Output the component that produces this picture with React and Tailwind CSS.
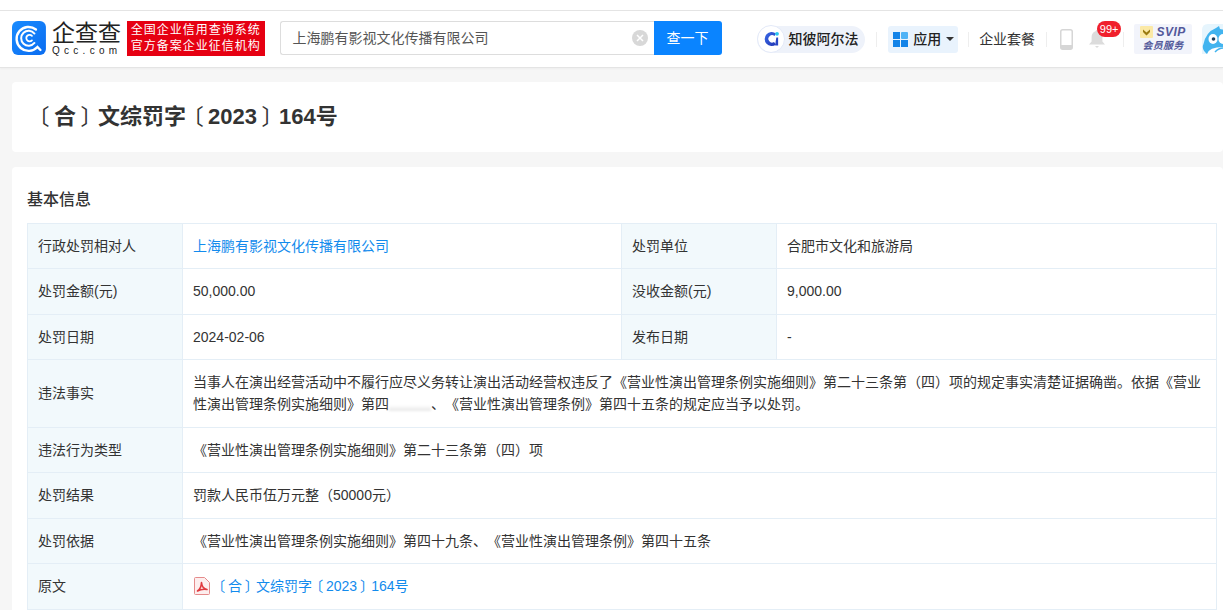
import React from 'react';

const FONT = 'font-["Liberation_Sans","Noto_Sans_CJK_SC",sans-serif]';

const LogoIcon = () => (
    <svg width="34" height="34" viewBox="0 0 34 34">
        <defs>
            <linearGradient id="logoBg" x1="0" y1="0" x2="1" y2="1">
                <stop offset="0" stopColor="#1a8cff" />
                <stop offset="1" stopColor="#0a6cf0" />
            </linearGradient>
        </defs>
        <rect width="34" height="34" rx="6" fill="url(#logoBg)" />
        <path d="M24 8.500a12 12 0 1 0 1.500 17.500l3 3" fill="none" stroke="#fff" strokeWidth="2.400" strokeLinecap="round" />
        <path d="M22.500 12.500a7.500 7.500 0 1 0 0 9.500" fill="none" stroke="#fff" strokeWidth="2" strokeLinecap="round" />
        <path d="M20 14.800a3.300 3.300 0 1 0 0 4.600" fill="none" stroke="#fff" strokeWidth="1.800" strokeLinecap="round" />
    </svg>
);

const AlphaIcon = () => (
    <svg width="28" height="28" viewBox="0 0 28 28" className="shrink-0">
        <defs>
            <linearGradient id="alphaC" x1="0" y1="0" x2="1" y2="1">
                <stop offset="0" stopColor="#3a6be8" />
                <stop offset="1" stopColor="#2236b4" />
            </linearGradient>
        </defs>
        <circle cx="14" cy="14" r="13.500" fill="#ffffff" stroke="#e3e9f8" />
        <path d="M19 8.500A7 7 0 1 0 19 19.500L17 17A3.700 3.700 0 1 1 17.500 11z" fill="url(#alphaC)" />
        <path d="M19.300 12.500h1.800v8h-3z" fill="#2a46c4" />
        <circle cx="20" cy="8.800" r="1.900" fill="#28c5f0" />
    </svg>
);

const AppsIcon = () => (
    <svg width="15" height="15" viewBox="0 0 15 15">
        <rect width="7" height="7" fill="#1283e8" />
        <rect x="8" width="7" height="7" rx="1" fill="#4db2f6" />
        <rect y="8" width="7" height="7" fill="#1283e8" />
        <rect x="8" y="8" width="7" height="7" fill="#1283e8" />
    </svg>
);

const PhoneIcon = () => (
    <svg width="13" height="21" viewBox="0 0 13 21">
        <rect x="0.750" y="0.750" width="11.500" height="19.500" rx="2" fill="none" stroke="#d6d6d6" strokeWidth="1.500" />
        <rect x="1" y="16" width="11" height="4" fill="#d6d6d6" />
    </svg>
);

const BellIcon = () => (
    <svg width="16" height="20" viewBox="0 0 16 20">
        <path d="M8 1c.8 0 1.300.5 1.400 1.200C12 3 13.400 5.200 13.400 8v4.500L16 15.500H0l2.600-3V8C2.600 5.200 4 3 6.600 2.200 6.700 1.500 7.200 1 8 1z" fill="#dcdcdc" />
        <path d="M6 17h4l-2 2z" fill="#dcdcdc" />
    </svg>
);

const CrownIcon = () => (
    <svg width="13" height="12" viewBox="0 0 13 12" className="shrink-0">
        <rect width="13" height="12" rx="1" fill="#fbe9a6" />
        <path d="M3 3.500l3.500 3 3.500-3v2.500L6.500 9.500 3 6z" fill="#9a7a10" />
    </svg>
);

const Penguin = () => (
    <svg width="21" height="30" viewBox="0 0 21 30">
        <path d="M0 6Q0 0 6 0h15v30H0z" fill="#e6f5fd" />
        <path d="M14 4l3-2 1 3q3 .5 3 .5V30H5Q-1 25 1.500 20 4 8 14 4z" fill="#42b4ef" />
        <ellipse cx="11" cy="15" rx="4.500" ry="5" fill="#fff" />
        <ellipse cx="21" cy="15" rx="4.500" ry="5" fill="#fff" />
        <circle cx="11.500" cy="15" r="1.800" fill="#1d3f5e" />
        <path d="M5 30q2-7 16-7v7z" fill="#fff" />
        <path d="M13 28q4-4 8-4" fill="none" stroke="#42b4ef" strokeWidth="1.500" />
    </svg>
);

const PdfIcon = () => (
    <svg width="16" height="18" viewBox="0 0 16 18" className="shrink-0">
        <path d="M1.500.5h9l5 5v11a1 1 0 0 1-1 1h-13a1 1 0 0 1-1-1v-15a1 1 0 0 1 1-1z" fill="#fdeeee" stroke="#e58b8b" />
        <path d="M3.500 14c2.500-1.500 3.800-4.500 4-8.500.3 4 2.300 6.300 5.500 7-3.300-.5-6.500-.2-9.500 1.500z" fill="none" stroke="#e0393e" strokeWidth="1.600" strokeLinejoin="round" />
    </svg>
);

const Divider = ({ className }) => <div className={`w-px h-[15px] bg-[#eeeeee] ${className}`} />;

// the reference has these brackets centred in their cell and light
const Open = () => <span className="inline-block font-normal pl-[0.3em] pr-[0.2em] [text-spacing-trim:trim-start]">〔</span>;
const Close = () => <span className="inline-block font-normal pl-[0.2em] tracking-[-0.2em]">〕</span>;

const Header = () => (
    <div className="bg-white pt-[10px]">
        <div className="h-[58px] border-y border-t-[#e4e4e4] border-b-[#e4e4e4] flex items-center pl-3 pb-[2px] overflow-hidden shadow-[0_1px_2px_rgba(0,0,0,0.04)]">
            <LogoIcon />
            <div className="ml-[6px] w-[70px] text-[#222222] flex flex-col">
                <span className="text-[23px] leading-[24px] whitespace-nowrap">企查查</span>
                <span className="text-[10px] leading-[11px] tracking-[4.300px] whitespace-nowrap">Qcc.com</span>
            </div>
            <div className="ml-[5px] w-[138px] h-[35px] bg-[#e60012] text-white text-[12px] leading-[16px] flex flex-col justify-center items-center">
                <span className="whitespace-nowrap tracking-[1px]">全国企业信用查询系统</span>
                <span className="whitespace-nowrap tracking-[1px]">官方备案企业征信机构</span>
            </div>
            <div className="ml-[15px] flex h-[34px]">
                <div className="w-[374px] border border-r-0 border-[#dddddd] rounded-l-[3px] flex items-center justify-between pl-3 pr-[6px] text-sm text-[#555555]">
                    <span>上海鹏有影视文化传播有限公司</span>
                    <span className="w-4 h-4 rounded-full bg-[#d8d8d8] text-white flex items-center justify-center">
                        <svg width="8" height="8" viewBox="0 0 8 8"><path d="M1 1l6 6M7 1l-6 6" stroke="#fff" strokeWidth="1.500" /></svg>
                    </span>
                </div>
                <div className="w-[68px] bg-[#0a84ff] rounded-r-[3px] text-white text-sm flex items-center justify-center">查一下</div>
            </div>
            <div className="ml-[35px] mt-[2px] w-[109px] h-[27px] rounded-full bg-[#eef2fa] flex items-center text-sm font-medium text-[#222222] whitespace-nowrap">
                <AlphaIcon />
                <span className="ml-[4px]">知彼阿尔法</span>
            </div>
            <Divider className="ml-[11px] mt-[2px]" />
            <div className="ml-[11px] mt-[2px] w-[70px] h-[27px] rounded-[3px] bg-[#e9f3fd] flex items-center pl-[5px] text-sm font-medium text-[#222222] whitespace-nowrap">
                <AppsIcon />
                <span className="ml-[5px]">应用</span>
                <span className="ml-[5px] border-x-4 border-x-transparent border-t-[4px] border-t-[#333333]" />
            </div>
            <Divider className="ml-[10px] mt-[2px]" />
            <span className="ml-[10px] mt-[2px] text-sm text-[#333333] whitespace-nowrap">企业套餐</span>
            <Divider className="ml-[11px] mt-[2px]" />
            <div className="ml-[13px] mt-[2px]"><PhoneIcon /></div>
            <div className="ml-[16px] mt-[2px] relative w-[16px] h-[20px]">
                <BellIcon />
                <span className="absolute left-[8px] -top-[8px] w-6 h-[16px] rounded-full bg-[#f0202c] text-white text-[11px] leading-[16px] text-center">99+</span>
            </div>
            <Divider className="ml-[18px] mt-[2px]" />
            <div className="ml-[10px] mt-[2px] w-[58px] h-[30px] bg-[#f2f4fb] rounded-[2px] flex flex-col items-center justify-center text-[#53599a] italic font-bold">
                <div className="flex items-center text-[12px] leading-[13px] tracking-[0.5px]">
                    <CrownIcon />
                    <span className="ml-[3px]">SVIP</span>
                </div>
                <span className="text-[10px] leading-[14px] tracking-[0.3px] whitespace-nowrap">会员服务</span>
            </div>
            <div className="ml-[10px] mt-[2px] shrink-0"><Penguin /></div>
        </div>
    </div>
);

const labelCls = 'bg-[#f2f9fc] border border-[#e4eef6] px-[10px] text-sm text-[#333333] font-normal text-left align-middle';
const valueCls = 'border border-[#e4eef6] px-[10px] text-sm text-[#333333] align-middle';

const Row = ({ h, up, label, children }) => (
    <tr className={h}>
        <th className={`${labelCls} ${up ? 'pb-[2px]' : ''}`}>{label}</th>
        <td className={`${valueCls} ${up ? 'pb-[2px]' : ''}`} colSpan={3}>{children}</td>
    </tr>
);

const Row4 = ({ h, up, label, value, label2, value2 }) => {
    const pad = up ? 'pb-[2px]' : '';
    return (
        <tr className={h}>
            <th className={`${labelCls} ${pad}`}>{label}</th>
            <td className={`${valueCls} ${pad}`}>{value}</td>
            <th className={`${labelCls} ${pad}`}>{label2}</th>
            <td className={`${valueCls} ${pad}`}>{value2}</td>
        </tr>
    );
};

const App = () => {
    return (
        <div className={`h-[610px] w-[1223px] overflow-hidden bg-[#f6f6f6] [text-spacing-trim:space-all] ${FONT}`}>
            <Header />
            <div className="pl-3 pt-[14px]">
                <div className="h-[70px] bg-white rounded-[4px] flex items-center pl-5 pb-[2px] text-[22px] font-bold text-[#333333]">
                    <span className="whitespace-nowrap"><Open />合<Close />文综罚字<Open />2023<Close />164号</span>
                </div>
                <div className="mt-[15px] bg-white rounded-[4px] pl-[15px] pr-[6px] pt-[21px] pb-4">
                    <h3 className="text-base font-medium leading-[24px] text-[#333333] mb-[11px]">基本信息</h3>
                    <table className="w-[1190px] table-fixed border-collapse">
                        <colgroup>
                            <col className="w-[155px]" />
                            <col className="w-[439px]" />
                            <col className="w-[155px]" />
                            <col />
                        </colgroup>
                        <tbody>
                            <Row4
                                h="h-[45px]"
                                label="行政处罚相对人"
                                value={<span className="text-[#128bed]">上海鹏有影视文化传播有限公司</span>}
                                label2="处罚单位"
                                value2="合肥市文化和旅游局"
                            />
                            <Row4 up h="h-[46px]" label="处罚金额(元)" value="50,000.00" label2="没收金额(元)" value2="9,000.00" />
                            <Row4 h="h-[45px]" label="处罚日期" value="2024-02-06" label2="发布日期" value2="-" />
                            <Row up h="h-[68px]" label="违法事实">
                                <p className="leading-[22px] whitespace-nowrap">当事人在演出经营活动中不履行应尽义务转让演出活动经营权违反了《营业性演出管理条例实施细则》第二十三条第（四）项的规定事实清楚证据确凿。依据《营业</p>
                                <div className="flex items-center leading-[22px] whitespace-nowrap">
                                    <span>性演出管理条例实施细则》第四</span>
                                    <span className="w-[42px] h-[6px] mt-[8px] bg-gradient-to-b from-white to-[#e8e8e8] blur-[1px]" />
                                    <span>、《营业性演出管理条例》第四十五条的规定应当予以处罚。</span>
                                </div>
                            </Row>
                            <Row h="h-[45px]" label="违法行为类型">《营业性演出管理条例实施细则》第二十三条第（四）项</Row>
                            <Row up h="h-[46px]" label="处罚结果">罚款人民币伍万元整（50000元）</Row>
                            <Row h="h-[45px]" label="处罚依据">《营业性演出管理条例实施细则》第四十九条、《营业性演出管理条例》第四十五条</Row>
                            <Row up h="h-[46px]" label="原文">
                                <span className="flex items-center text-[#128bed]">
                                    <span className="ml-px"><PdfIcon /></span>
                                    <span className="ml-[4px]"><Open />合<Close />文综罚字<Open />2023<Close />164号</span>
                                </span>
                            </Row>
                        </tbody>
                    </table>
                </div>
            </div>
        </div>
    );
};

export default App;
